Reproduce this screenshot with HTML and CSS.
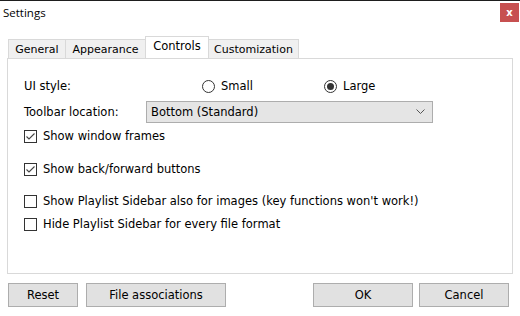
FILE: index.html
```html
<!DOCTYPE html>
<html lang="en">
<head>
    <meta charset="UTF-8">
    <title>Settings</title>
    <link rel="stylesheet" href="styles.css">
</head>
<body>
<div class="window">
    <div class="titlebar">
        <span class="title">Settings</span>
        <span class="close">x</span>
    </div>

    <!-- Tabs -->
    <div class="tabs">
        <div class="tab tab-general">General</div>
        <div class="tab tab-appearance">Appearance</div>
        <div class="tab tab-controls active">Controls</div>
        <div class="tab tab-custom">Customization</div>
    </div>

    <div class="panel">
        <div class="row row-style">
            <span class="label">UI style:</span>
            <label class="radio-item radio-small"><span class="radio"></span>Small</label>
            <label class="radio-item"><span class="radio checked"></span>Large</label>
        </div>

        <div class="row row-toolbar">
            <span class="label">Toolbar location:</span>
            <div class="select">
                <span>Bottom (Standard)</span>
                <svg class="chevron" width="9" height="6" viewBox="0 0 9 6">
                    <path d="M0.5 0.5 L4.5 4.5 L8.5 0.5" fill="none" stroke="#555" stroke-width="1"/>
                </svg>
            </div>
        </div>

        <div class="row check-row row-frames">
            <span class="checkbox">
                <svg width="11" height="11" viewBox="0 0 11 11">
                    <path d="M1.5 5.5 L4 8 L9.5 2.5" fill="none" stroke="#444" stroke-width="1.1"/>
                </svg>
            </span>
            Show window frames
        </div>

        <div class="row check-row row-back">
            <span class="checkbox">
                <svg width="11" height="11" viewBox="0 0 11 11">
                    <path d="M1.5 5.5 L4 8 L9.5 2.5" fill="none" stroke="#444" stroke-width="1.1"/>
                </svg>
            </span>
            Show back/forward buttons
        </div>

        <div class="row check-row row-images">
            <span class="checkbox"></span>
            Show Playlist Sidebar also for images (key functions won't work!)
        </div>

        <div class="row check-row row-hide">
            <span class="checkbox"></span>
            Hide Playlist Sidebar for every file format
        </div>
    </div>

    <div class="footer">
        <button class="btn btn-reset">Reset</button>
        <button class="btn btn-assoc">File associations</button>
        <span class="spacer"></span>
        <button class="btn btn-ok">OK</button>
        <button class="btn btn-cancel">Cancel</button>
    </div>
</div>
</body>
</html>
```

FILE: styles.css
```css
/* Dialog window */
body {
    margin: 0;
    background-color: #fff;
    font-family: "DejaVu Sans", Verdana, sans-serif;
    font-size: 11.5px;
    color: #000;
}

.window {
    width: 520px;
    height: 316px;
    border-top: 1px solid #1e1e1e;
    box-sizing: border-box;
    overflow: hidden;
}

.titlebar {
    height: 36px;
    display: flex;
    align-items: flex-start;
    justify-content: space-between;
}

.title {
    font-family: "Open Sans", "Noto Sans", sans-serif;
    font-size: 11.5px;
    margin: 4px 0 0 3px;
}

.close {
    width: 19px;
    height: 19px;
    margin: 2px 1px 0 0;
    background-color: #c75050;
    color: #fff;
    font-weight: bold;
    font-size: 10px;
    display: flex;
    align-items: center;
    justify-content: center;
}

/* Tabs */
.tabs {
    display: flex;
    align-items: flex-end;
    margin-left: 8px;
    height: 21px;
    position: relative;
    z-index: 1;
}

.tab {
    height: 18px;
    border: 1px solid #d9d9d9;
    border-bottom: none;
    background-color: #f0f0f0;
    display: flex;
    align-items: center;
    justify-content: center;
    margin-right: -1px;
    font-size: 11px;
}

.tab-general { width: 56px; }
.tab-appearance { width: 79px; }
.tab-custom { width: 89px; }

.tab.active {
    height: 21px;
    width: 62px;
    background-color: #fff;
    align-items: flex-start;
    line-height: 19px;
    font-size: 11.5px;
}

.panel {
    margin: 0 7px;
    height: 216px;
    border: 1px solid #d9d9d9;
    box-sizing: border-box;
    padding-left: 16px;
    background-color: #fff;
}

.row {
    display: flex;
    align-items: center;
    height: 20px;
}

.label {
    width: 122px;
}

.row-style { margin-top: 17px; }
.row-toolbar { margin-top: 5px; height: 22px; }
.row-frames { margin-top: 3px; }
.row-back { margin-top: 13px; }
.row-images { margin-top: 12px; }
.row-hide { margin-top: 3px; }

.radio-item {
    display: flex;
    align-items: center;
}

.radio-small {
    margin-left: 56px;
    width: 122px;
}

.radio {
    width: 11px;
    height: 11px;
    border: 1px solid #333;
    border-radius: 50%;
    margin-right: 6px;
    position: relative;
}

.radio.checked::after {
    content: "";
    position: absolute;
    left: 2px;
    top: 2px;
    width: 7px;
    height: 7px;
    border-radius: 50%;
    background-color: #333;
}

.select {
    width: 287px;
    height: 22px;
    border: 1px solid #adadad;
    background-color: #e5e5e5;
    box-sizing: border-box;
    display: flex;
    align-items: center;
    justify-content: space-between;
    padding: 0 7px 0 4px;
}

.checkbox {
    width: 11px;
    height: 11px;
    border: 1px solid #333;
    margin-right: 6px;
    display: flex;
    align-items: center;
    justify-content: center;
}

/* Buttons */
.footer {
    display: flex;
    margin: 9px 11px 0 8px;
}

.btn {
    height: 24px;
    border: 1px solid #adadad;
    background-color: #e1e1e1;
    font-family: "DejaVu Sans", Verdana, sans-serif;
    font-size: 11.5px;
    color: #000;
    padding: 0;
}

.btn-reset { width: 70px; }
.btn-assoc { width: 140px; margin-left: 8px; }
.btn-ok { width: 100px; }
.btn-cancel { width: 90px; margin-left: 6px; }

.spacer { flex: 1; }
```
